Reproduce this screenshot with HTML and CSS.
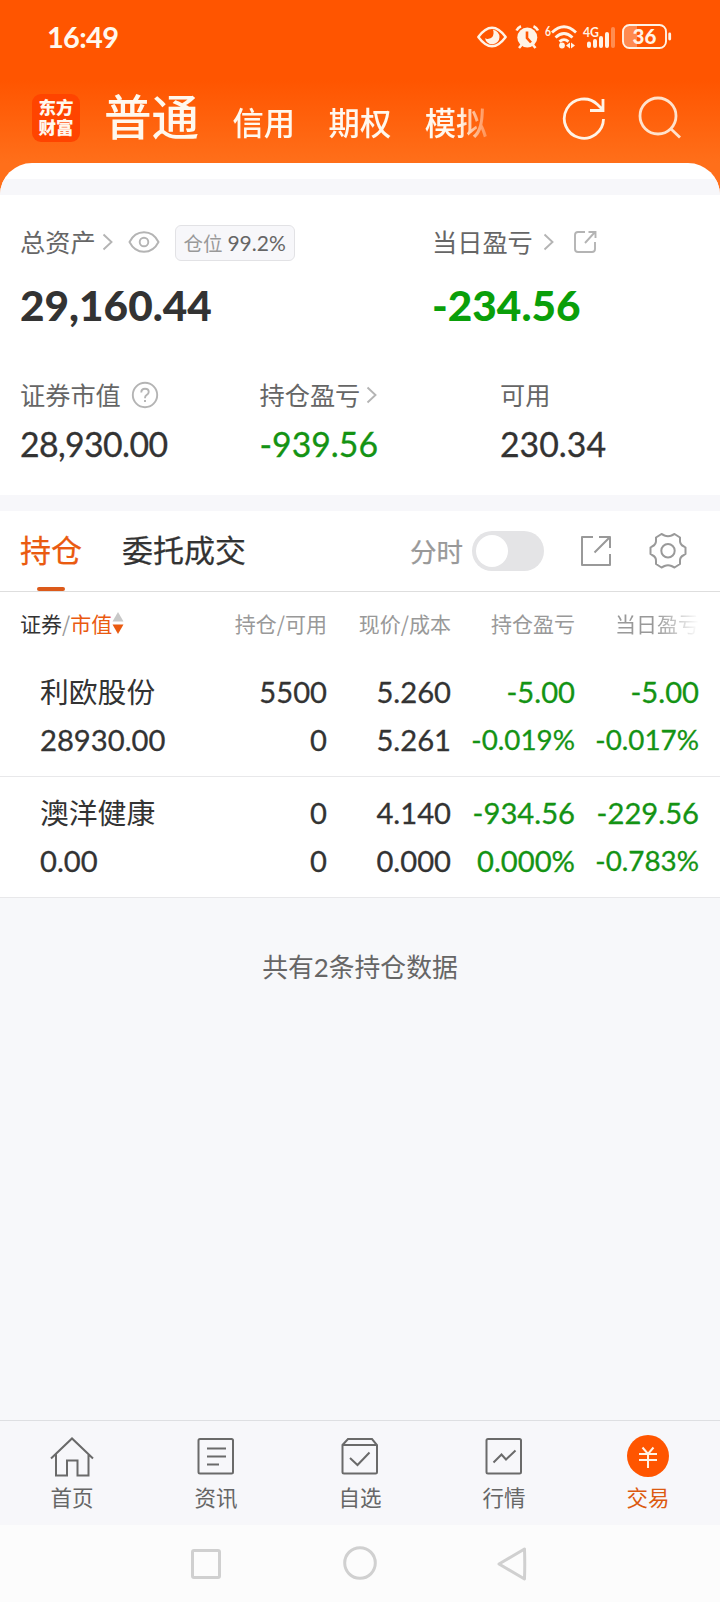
FILE: index.html
```html
<!DOCTYPE html>
<html lang="zh-CN">
<head>
<meta charset="utf-8">
<title>持仓</title>
<link rel="stylesheet" href="styles.css">
</head>
<body>
<div class="app">
  <header class="top">
    <div class="status">
      <span class="clock">16:49</span>
      <svg class="status-icons" width="196" height="28" viewBox="0 0 196 28">
        <path d="M2.300 14Q16 -4.500 29.700 14Q16 32.500 2.300 14Z" fill="none" stroke="#fff3e6" stroke-width="2.400" stroke-linejoin="round"/>
        <path d="M17 6.800a7.300 7.300 0 1 1-8 8.500q2 1 3.500 .5q4.500-.5 5-5q.2-2.500-.5-4Z" fill="#fff3e6"/>
        <circle cx="51.300" cy="14.500" r="10" fill="#fff3e6"/>
        <path d="M40.500 7.500Q42 4.500 45 3.300M57.500 3.300Q60.500 4.500 62 7.500M43 25l3-3.500M56.500 21.500l3 3.500" fill="none" stroke="#fff3e6" stroke-width="2.600"/>
        <path d="M51 8.500v6.500l4 4.500" fill="none" stroke="#ff5500" stroke-width="2.600"/>
        <text x="69" y="13" class="tiny" textLength="6" lengthAdjust="spacingAndGlyphs">6</text>
        <g fill="none" stroke="#fff3e6" stroke-width="2.800">
          <path d="M76 9.500Q88 -2 100 9.500"/><path d="M79.500 14.500Q88 6.500 96.500 14.500"/><path d="M83.500 18.600Q88 14.600 92.500 18.600"/>
        </g>
        <circle cx="86" cy="22.500" r="2.900" fill="#fff3e6"/>
        <path d="M94 19.500v6l-4-3zM95 19.500v6l4-3z" fill="#fff3e6"/>
        <text x="107" y="14" class="tiny" textLength="16" lengthAdjust="spacingAndGlyphs">4G</text>
        <g stroke="#fff3e6" stroke-width="4" stroke-linecap="round">
          <path d="M113 20.500v2.500M119 18v5M125 15v8M131 11v12"/><path d="M137 6v17" opacity=".35"/>
        </g>
        <path d="M151 3h10v21h-10q-3-1-3-5V8q0-4 3-5Z" fill="#ff8a50"/>
        <rect x="147" y="2" width="43" height="23" rx="6.500" fill="none" stroke="#fff3e6" stroke-width="1.900"/>
        <path d="M193.700 11v5" stroke="#fff3e6" stroke-width="2.800" stroke-linecap="round"/>
        <text x="168.500" y="20.800" text-anchor="middle" class="battery">36</text>
      </svg>
    </div>
    <nav class="accounts">
      <div class="logo"><span>东方</span><span>财富</span></div>
      <div class="account-list">
        <b class="account-on">普通</b><span>信用</span><span>期权</span><span>模拟</span>
      </div>
      <svg class="refresh" width="44" height="44" viewBox="0 0 44 44" fill="none" stroke="#fff3e6" stroke-width="2.800"><path d="M41.500 23A19.600 19.600 0 1 1 35.500 8.500L40.500 13.500M41 3V14.500H28"/></svg>
      <svg width="44" height="44" viewBox="0 0 44 44" fill="none" stroke="#ffe2cc" stroke-width="2.800"><circle cx="20" cy="20" r="18"/><path d="M32.500 32.500L42 41.500"/></svg>
    </nav>
  </header>

  <main class="sheet">
    <div class="band"></div>
    <section class="summary">
      <div class="totals">
        <div>
          <div class="label"><span>总资产</span><svg class="chev" width="12" height="18" viewBox="0 0 12 18"><path d="M1.500 1.500L9.500 9L1.500 16.500"/></svg><svg class="eye" width="32" height="22" viewBox="0 0 32 22"><path d="M1.500 11C8-2 24-2 30.500 11C24 24 8 24 1.500 11Z"/><circle cx="16" cy="11" r="4.300"/></svg><span class="badge">仓位 <em>99.2%</em></span></div>
          <div class="big">29,160.44</div>
        </div>
        <div>
          <div class="label"><span>当日盈亏</span><svg class="chev chev-wide" width="12" height="18" viewBox="0 0 12 18"><path d="M1.500 1.500L9.500 9L1.500 16.500"/></svg><svg class="share" width="24" height="24" viewBox="0 0 24 24"><path d="M12 2H5Q2 2 2 5V19Q2 22 5 22H19Q22 22 22 19V12M12 13L22 2M15.500 2H22.500V8"/></svg></div>
          <div class="big big-day down">-234.56</div>
        </div>
      </div>
      <div class="stats">
        <div><div class="label"><span>证券市值</span><svg class="help" width="28" height="28" viewBox="0 0 28 28"><circle cx="14" cy="14" r="12.200"/><path d="M10.300 11.500Q10.300 7.800 14 7.800Q17.700 7.800 17.700 11Q17.700 13 15.500 14.200Q14 15 14 17.200M14 19V21"/></svg></div><div class="num num-worth">28,930.00</div></div>
        <div><div class="label"><span>持仓盈亏</span><svg class="chev" width="12" height="18" viewBox="0 0 12 18"><path d="M1.500 1.500L9.500 9L1.500 16.500"/></svg></div><div class="num down">-939.56</div></div>
        <div><div class="label"><span>可用</span></div><div class="num">230.34</div></div>
      </div>
    </section>
    <div class="band"></div>

    <section class="holdings">
      <div class="tabs">
        <span class="tab tab-on">持仓</span><span class="tab">委托成交</span>
        <span class="minute">分时</span><span class="switch"></span>
        <svg class="open" width="32" height="32" viewBox="0 0 32 32"><path d="M13 2H2V30H30V19M14.500 17.500L30 2M19 2H30V13"/></svg>
        <svg class="gear" width="38" height="38" viewBox="0 0 38 38"><path d="M12.500 2L15.500 3.500Q19 5 22.500 3.500L25.500 2L31 5.500V8Q30.500 12.500 35 14.500L36.500 15.500V22L35 23Q30.500 25 31 29.500V32L25.500 35.500L22.500 34Q19 32.500 15.500 34L12.500 35.500L7 32V29.500Q7.500 25 3 23L1.500 22V15.500L3 14.500Q7.500 12.500 7 8V5.500Z"/><circle cx="19" cy="18.700" r="6.700"/></svg>
      </div>
      <div class="grid head">
        <span class="sort"><i>证券</i>/<b>市值</b><svg width="12" height="22" viewBox="0 0 12 22"><path d="M6 0L11.500 9.500H.5Z" fill="#c8c8c8"/><path d="M6 22L11.500 12.500H.5Z" fill="#ea5a10"/></svg></span>
        <span>持仓/可用</span><span>现价/成本</span><span>持仓盈亏</span><span class="fade">当日盈亏</span>
      </div>
      <div class="grid row">
        <span class="name">利欧股份</span><span>5500</span><span>5.260</span><span class="down">-5.00</span><span class="down">-5.00</span>
        <span class="worth">28930.00</span><span>0</span><span>5.261</span><span class="down pct">-0.019%</span><span class="down pct">-0.017%</span>
      </div>
      <div class="grid row">
        <span class="name">澳洋健康</span><span>0</span><span>4.140</span><span class="down">-934.56</span><span class="down">-229.56</span>
        <span class="worth">0.00</span><span>0</span><span>0.000</span><span class="down">0.000%</span><span class="down pct">-0.783%</span>
      </div>
    </section>
    <p class="count">共有2条持仓数据</p>
  </main>

  <nav class="menu">
    <a><svg width="46" height="44" viewBox="0 0 46 44"><path d="M2 23.500L23 3.500L44 23.500M7 19.500V40.500H18V25.500H28.500V40.500H39.500V19.500"/></svg>首页</a>
    <a><svg width="46" height="44" viewBox="0 0 46 44"><rect x="5.500" y="4" width="34.500" height="34.500" rx="1.500"/><path d="M14 13.500H33M14 21.500H33M14 29.500H26"/></svg>资讯</a>
    <a><svg width="46" height="44" viewBox="0 0 46 44"><path d="M5.500 10L11 4H35L40 10V37Q40 38.500 38.500 38.500H7Q5.500 38.500 5.500 37ZM5.500 10H40M13 23L20.500 30L32.500 17.500"/></svg>自选</a>
    <a><svg width="46" height="44" viewBox="0 0 46 44"><rect x="5.500" y="4" width="34.500" height="34.500" rx="1.500"/><path d="M12.500 27.500L20.500 19.500L25 24.500L34.500 15.500"/></svg>行情</a>
    <a class="menu-on"><svg width="46" height="44" viewBox="0 0 46 44"><circle cx="23" cy="21" r="21" fill="#ff5500" stroke="none"/><path d="M17.500 12.500L23 19L28.500 12.500M14 19H32M14 25H32M23 19V33" stroke="#fff3e6"/></svg>交易</a>
  </nav>
  <div class="system">
    <svg width="340" height="40" viewBox="0 0 340 40" fill="none" stroke="#d0d0d0" stroke-width="3" stroke-linejoin="round"><rect x="2.500" y="6.500" width="27" height="27" rx="1.500"/><circle cx="170" cy="19" r="15.300"/><path d="M309 20L334.500 5Q335 20 334.500 35Z"/></svg>
  </div>
</div>
</body>
</html>
```

FILE: styles.css
```css
* { box-sizing: border-box; }
body {
  margin: 0;
  font-family: Lato, "Noto Sans CJK SC", sans-serif;
  color: #333;
}
i, em { font-style: normal; }
b { font-weight: inherit; }
svg { flex: none; display: block; }

.app {
  width: 720px;
  height: 1602px;
  display: flex;
  flex-direction: column;
  background: #f7f8fa;
  overflow: hidden;
}

.top {
  height: 195px;
  flex: none;
  color: #fff8ee;
  background: linear-gradient(#ff5500 80px, #ff6f1a 163px);
}
.status {
  height: 74px;
  padding: 0 48px 0 47px;
  display: flex;
  align-items: center;
  justify-content: space-between;
}
.clock { margin-top: -1px; font-size: 29px; font-weight: 700; letter-spacing: -.7px; }
.tiny { font: 700 13.500px Lato, sans-serif; fill: #fff3e6; }
.battery { font: 900 20.500px Lato, sans-serif; fill: #fff3e6; }
.accounts {
  height: 88px;
  padding: 0 38px 0 32px;
  display: flex;
  align-items: center;
}
.logo {
  width: 48px;
  height: 48px;
  padding-top: 3px;
  border-radius: 9px;
  background: #ff4400;
  display: flex;
  flex-direction: column;
  align-items: center;
  font: 900 17.500px/20px "Noto Sans CJK SC", sans-serif;
}
.account-list {
  width: 384px;
  margin-left: 24px;
  display: flex;
  align-items: baseline;
  gap: 33.500px;
  font: 500 31.300px/60px "Noto Sans CJK SC", sans-serif;
  -webkit-mask-image: linear-gradient(90deg, #000 355px, transparent 395px);
  mask-image: linear-gradient(90deg, #000 355px, transparent 395px);
}
.account-on { font-size: 47.500px; }
.refresh { margin: 0 32px 0 74px; }

.sheet {
  position: relative;
  margin-top: -32px;
  padding-top: 16px;
  flex: 1;
  border-radius: 32px 32px 0 0;
  overflow: hidden;
  background: linear-gradient(#fff 700px, #f7f8fa 700px);
}
.band { height: 16px; background: #f7f7fa; }
.summary { height: 300px; padding: 24px 0 0 20px; background: #fff; }
.totals { display: grid; grid-template-columns: 412px 1fr; height: 153px; }
.stats { display: grid; grid-template-columns: 239.500px 240.500px 1fr; }
.label {
  height: 46px;
  display: flex;
  align-items: center;
  font: 400 25.200px/40px "Noto Sans CJK SC", sans-serif;
  color: #666;
}
.label > span:first-child { margin-top: -2px; }
.label svg { fill: none; stroke: #b4b4b4; stroke-width: 1.900; }
.chev { margin-left: 6px; }
.label .chev-wide { margin-left: 10px; }
.eye { margin-left: 14px; }
.share { margin-left: 18px; }
.help { margin-left: 10px; }
.badge {
  width: 120px;
  height: 36px;
  margin: 1px 0 0 15px;
  border: 1px solid #e2e2e5;
  border-radius: 6px;
  background: #f7f7fa;
  font: 19.500px/33px Lato, "Noto Sans CJK SC", sans-serif;
  text-align: center;
  color: #999;
  white-space: nowrap;
}
.badge em { color: #666; font-size: 21px; }
.big { margin-top: 15px; font-size: 42.300px; line-height: 50px; font-weight: 900; }
.num { margin-top: 5px; font-size: 33.800px; line-height: 42px; -webkit-text-stroke: .3px; }
.num-worth { letter-spacing: -.6px; }
.down { color: #149314; }
.big-day { color: #0a9f0a; }

.holdings { background: #fff; }
.tabs {
  height: 81px;
  padding-left: 20px;
  border-bottom: 1px solid #dedede;
  display: flex;
  align-items: center;
  font: 400 31px/76px "Noto Sans CJK SC", sans-serif;
  -webkit-text-stroke: .25px;
}
.tab { margin-right: 40px; height: 80px; }
.tab-on { color: #ea5a10; display: flex; flex-direction: column; align-items: center; }
.tab-on::after { content: ""; width: 28px; height: 4px; border-radius: 2px; background: #dc5a1a; }
.minute { margin-left: 124px; font-size: 26.500px; color: #999; }
.switch { width: 72px; height: 40px; margin-left: 9px; padding: 4px; border-radius: 20px; background: #e4e4e6; }
.switch::before { content: ""; display: block; width: 32px; height: 32px; border-radius: 50%; background: #fff; }
.open, .gear { fill: none; stroke: #999; stroke-width: 2; stroke-linejoin: round; }
.open { margin-left: 36px; }
.gear { margin-left: 37px; }

.grid {
  display: grid;
  grid-template-columns: 186px 121px 124px 124px 124px;
  padding-left: 20px;
  text-align: right;
  white-space: nowrap;
}
.head { height: 64px; font: 400 21px/62px "Noto Sans CJK SC", sans-serif; color: #999; }
.sort { height: 62px; display: flex; align-items: center; }
.sort i { color: #333; }
.sort b { color: #ea5a10; }
.fade {
  -webkit-mask-image: linear-gradient(90deg, #000 65%, transparent 100%);
  mask-image: linear-gradient(90deg, #000 65%, transparent 100%);
}
.row {
  height: 121px;
  padding-top: 12px;
  grid-auto-rows: 48px;
  line-height: 48px;
  border-bottom: 1px solid #e8e8ea;
  font-size: 29.200px;
  -webkit-text-stroke: .3px;
}
.name, .worth { padding-left: 20px; text-align: left; }
.name { margin-top: -1px; font-family: "Noto Sans CJK SC", sans-serif; font-size: 28.800px; -webkit-text-stroke: 0; }
.pct { font-size: 27.800px; }
.count { margin: 0; padding-top: 47px; text-align: center; font-size: 25.800px; line-height: 44px; color: #666; }

.menu {
  height: 105px;
  flex: none;
  padding-top: 14px;
  border-top: 1px solid #dedfe2;
  background: #f7f7fa;
  display: grid;
  grid-template-columns: repeat(5, 1fr);
}
.menu a {
  display: flex;
  flex-direction: column;
  align-items: center;
  font: 21.500px/36px "Noto Sans CJK SC", sans-serif;
  color: #666;
}
.menu svg { fill: none; stroke: #6a6a6a; stroke-width: 2; }
.menu .menu-on { color: #dc5a10; }
.system { height: 77px; flex: none; padding: 19px 0 0 190px; background: #fcfcfc; }
```
